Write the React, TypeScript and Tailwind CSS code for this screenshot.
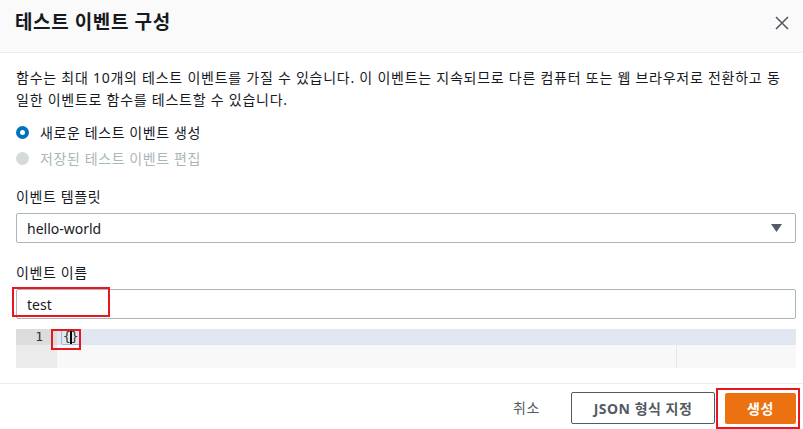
import React from "react";

export default function App() {
  const font = { fontFamily: '"Noto Sans", "Noto Sans CJK KR", sans-serif' };
  return (
    <div className="w-[803px] h-[429px] bg-white overflow-hidden text-[#16191f]" style={font}>
      <div className="h-[53px] bg-[#fafafa] border-b border-[#eaeded] flex items-center justify-between pl-[15px] pr-[10px]">
        <div className="text-[19px] font-bold leading-none mt-[-8px] tracking-[0.6px]">테스트 이벤트 구성</div>
        <svg width="14" height="14" viewBox="0 0 14 14" className="mt-[-6px] mr-[4px]">
          <path d="M1 1L13 13M13 1L1 13" stroke="#545b64" strokeWidth="1.6" />
        </svg>
      </div>
      <div className="pl-[16px] pr-[7px]">
        <p className="text-[14px] leading-[22px] mt-[14px] mr-[9px] text-[#16191f] tracking-[0.75px] break-all">
          함수는 최대 10개의 테스트 이벤트를 가질 수 있습니다. 이 이벤트는 지속되므로 다른 컴퓨터 또는 웹 브라우저로 전환하고 동일한 이벤트로 함수를 테스트할 수 있습니다.
        </p>
        <div className="mt-[10px] flex flex-col gap-[4px] tracking-[0.6px]">
          <div className="flex items-center h-[22px] text-[14px]">
            <span className="w-[13px] h-[13px] rounded-full border-[4px] border-[#0073bb] bg-white mr-[11px]" />
            <span>새로운 테스트 이벤트 생성</span>
          </div>
          <div className="flex items-center h-[22px] text-[14px] text-[#aab7b8]">
            <span className="w-[13px] h-[13px] rounded-full bg-[#d5dbdb] mr-[11px]" />
            <span>저장된 테스트 이벤트 편집</span>
          </div>
        </div>
        <div className="mt-[17px] text-[14px] leading-[22px] text-[#16191f] tracking-[0.6px]">이벤트 템플릿</div>
        <div className="mt-[5px] h-[30px] border border-[#aab7b8] rounded-[2px] flex items-center justify-between pl-[10px] pr-[13px] text-[14px]">
          <span>hello-world</span>
          <svg width="11" height="8" viewBox="0 0 11 8"><path d="M0 0H11L5.5 8Z" fill="#545b64" /></svg>
        </div>
        <div className="mt-[19px] text-[14px] leading-[22px] tracking-[0.6px]">이벤트 이름</div>
        <div className="relative mt-[5px] h-[30px] border border-[#aab7b8] rounded-[2px] flex items-center pl-[10px] text-[14px]">
          <span>test</span>
          <div className="absolute left-[-5px] top-[-3px] w-[98px] h-[30px] border-2 border-[#e8161f]" />
        </div>
        <div className="relative mt-[10px] flex h-[39px]">
          <div className="w-[41px] flex flex-col">
            <div className="h-[16px] bg-[#dcdcdc] text-[13px] leading-[16px] text-right pr-[14px] text-[#333]" style={{ fontFamily: '"DejaVu Sans Mono", monospace' }}>1</div>
            <div className="flex-1 bg-[#ebebeb]" />
          </div>
          <div className="flex-1 flex flex-col relative">
            <div className="h-[16px] bg-[#e0e7f0] flex items-center pl-[4px]">
              <span className="relative text-[13px] leading-[14px] border border-[#a8b4d0] rounded-[2px] px-[1px] text-[#333]" style={{ fontFamily: '"DejaVu Sans Mono", monospace' }}>
                {"{"}<span className="inline-block w-[2px] h-[14px] bg-black align-middle mx-[-1px]" />{"}"}
              </span>
            </div>
            <div className="flex-1 bg-[#f8f8f8]" />
            <div className="absolute left-[619px] top-0 bottom-0 w-px bg-[#e6e6e6]" />
          </div>
          <div className="absolute left-[35px] top-0 w-[30px] h-[21px] border-2 border-[#e8161f]" />
        </div>
      </div>
      <div className="mt-[15px] border-t border-[#eaeded] flex items-center justify-end pr-[7px] pt-[8px] text-[14px]">
        <span className="text-[#545b64] mr-[31px] mt-[-2px] tracking-[0.6px]">취소</span>
        <div className="h-[32px] w-[144px] border border-[#545b64] rounded-[2px] flex items-center justify-center font-bold text-[#545b64] mr-[10px] tracking-[0.5px]">JSON 형식 지정</div>
        <div className="relative">
          <div className="h-[31px] w-[71px] bg-[#ec7211] rounded-[2px] flex items-center justify-center font-bold text-white tracking-[0.6px]">생성</div>
          <div className="absolute left-[-9px] top-[-5px] w-[84px] h-[41px] border-2 border-[#e8161f]" />
        </div>
      </div>
    </div>
  );
}
